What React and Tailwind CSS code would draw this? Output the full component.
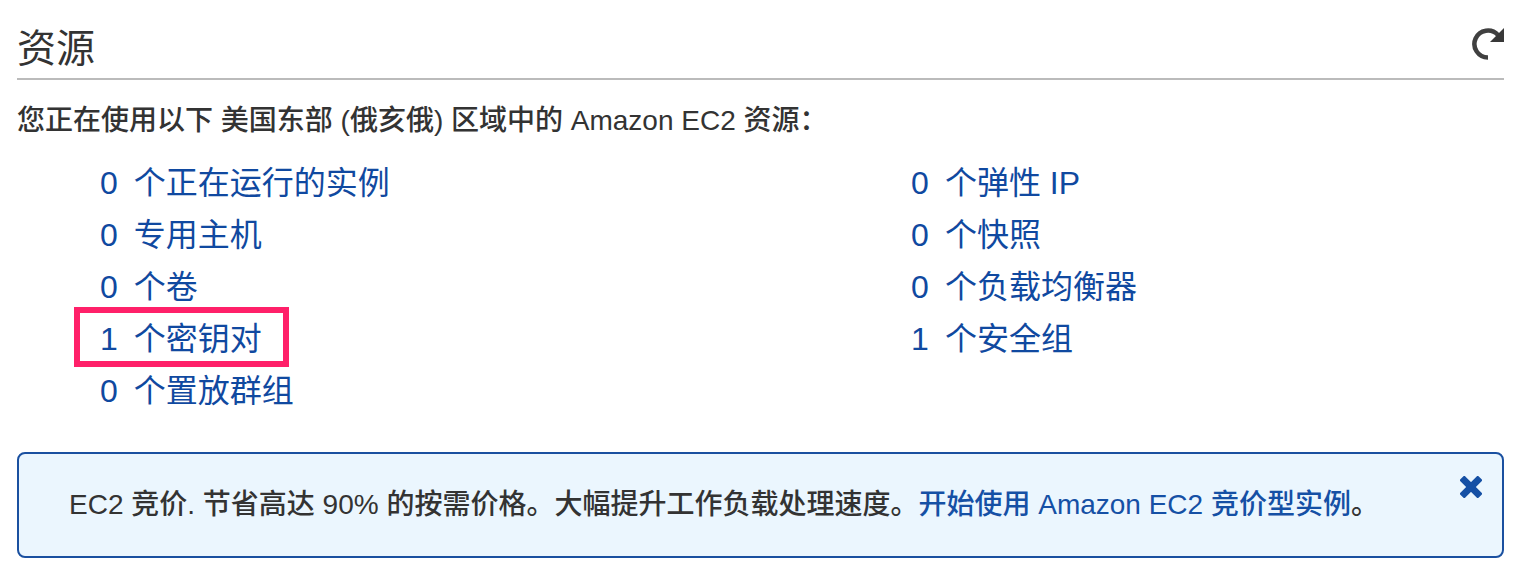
const leftItems = [
  [0, "个正在运行的实例"],
  [0, "专用主机"],
  [0, "个卷"],
  [1, "个密钥对"],
  [0, "个置放群组"],
];
const rightItems = [
  [0, "个弹性 IP"],
  [0, "个快照"],
  [0, "个负载均衡器"],
  [1, "个安全组"],
];

function ResourceList({ items, marked }) {
  return (
    <ul className="pl-[83px] text-[32px] font-normal leading-[52px] text-[#1049a0]">
      {items.map(([count, label]) => (
        <li key={label} className="relative">
          {label === marked && (
            <span className="absolute -left-[26px] -top-[6px] h-[60px] w-[215px] border-[6px] border-[#ff2069]" />
          )}
          <a href="#" className="relative flex gap-4 whitespace-nowrap">
            <span>{count}</span>
            <span>{label}</span>
          </a>
        </li>
      ))}
    </ul>
  );
}

export default function App() {
  return (
    <main className="bg-white pl-[17px] pr-6 pt-4 pb-5 font-['Liberation_Sans','Noto_Sans_CJK_SC',sans-serif] font-medium text-[#333]">
      <header className="flex h-16 items-center justify-between border-b-2 border-[#bbb]">
        <h1 className="pt-1 text-[39px] font-normal leading-[60px]">资源</h1>
        <button type="button" aria-label="刷新" className="-mt-1.5">
          <svg className="h-8 w-8" viewBox="0 0 32 32" fill="none">
            <path d="M16 29.5A13.5 13.5 0 1 1 26 7" stroke="#404040" strokeWidth="4.5" />
            <path d="M32 0V14H18Z" fill="#383838" />
          </svg>
        </button>
      </header>
      <p className="pt-[21px] text-[28px] leading-[40px]">您正在使用以下 美国东部 (俄亥俄) 区域中的 Amazon EC2 资源：</p>
      <div className="grid grid-cols-[6fr_5fr] pt-4">
        <ResourceList items={leftItems} marked="个密钥对" />
        <ResourceList items={rightItems} />
      </div>
      <aside className="mt-[35px] flex items-start justify-between rounded-lg border-2 border-[#1a50a0] bg-[#ebf6fe] pl-[50px] pr-5 pt-5 pb-8">
        <p className="pt-3 text-[28px] leading-[38px]">
          EC2 竞价. 节省高达 90% 的按需价格。大幅提升工作负载处理速度。
          <a href="#" className="text-[#1550a5]">开始使用 Amazon EC2 竞价型实例</a>。
        </p>
        <button type="button" aria-label="关闭" className="pt-0.5">
          <svg className="h-[22px] w-[22px]" viewBox="0 0 22 22" fill="#1550a5">
            <rect x="-2" y="7.5" width="26" height="7" rx="1.5" transform="rotate(45 11 11)" />
            <rect x="-2" y="7.5" width="26" height="7" rx="1.5" transform="rotate(-45 11 11)" />
          </svg>
        </button>
      </aside>
    </main>
  );
}
